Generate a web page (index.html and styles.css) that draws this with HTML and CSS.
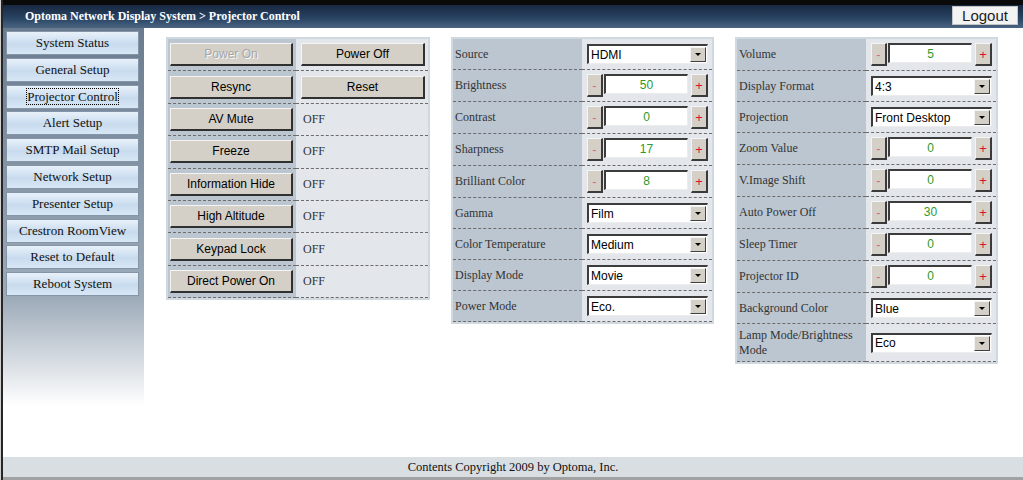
FILE: index.html
```html
<!DOCTYPE html>
<html lang="en">
<head>
    <meta charset="UTF-8">
    <title>Optoma Network Display System - Projector Control</title>
    <link rel="stylesheet" href="styles.css">
</head>
<body>
    <div class="page">
        <header class="topbar">
            <div class="title">Optoma Network Display System &gt; Projector Control</div>
            <button class="logout">Logout</button>
        </header>

        <div class="main-row">
            <nav class="sidebar">
                <a class="nav-btn">System Status</a>
                <a class="nav-btn">General Setup</a>
                <a class="nav-btn"><span class="focused">Projector Control</span></a>
                <a class="nav-btn">Alert Setup</a>
                <a class="nav-btn">SMTP Mail Setup</a>
                <a class="nav-btn">Network Setup</a>
                <a class="nav-btn">Presenter Setup</a>
                <a class="nav-btn">Crestron RoomView</a>
                <a class="nav-btn">Reset to Default</a>
                <a class="nav-btn">Reboot System</a>
            </nav>

            <main class="content">
                <!-- Power / toggle buttons -->
                <div class="panel panel-actions">
                    <div class="cell key"><button class="btn" disabled>Power On</button></div>
                    <div class="cell val"><button class="btn">Power Off</button></div>
                    <div class="cell key"><button class="btn">Resync</button></div>
                    <div class="cell val"><button class="btn">Reset</button></div>
                    <div class="cell key"><button class="btn">AV Mute</button></div>
                    <div class="cell val state">OFF</div>
                    <div class="cell key"><button class="btn">Freeze</button></div>
                    <div class="cell val state">OFF</div>
                    <div class="cell key"><button class="btn">Information Hide</button></div>
                    <div class="cell val state">OFF</div>
                    <div class="cell key"><button class="btn">High Altitude</button></div>
                    <div class="cell val state">OFF</div>
                    <div class="cell key"><button class="btn">Keypad Lock</button></div>
                    <div class="cell val state">OFF</div>
                    <div class="cell key"><button class="btn">Direct Power On</button></div>
                    <div class="cell val state">OFF</div>
                </div>

                <!-- Picture settings -->
                <div class="panel panel-settings">
                    <div class="cell key row-sel">Source</div>
                    <div class="cell val row-sel"><div class="select"><span>HDMI</span><i class="arrow"></i></div></div>
                    <div class="cell key row-spin">Brightness</div>
                    <div class="cell val row-spin"><div class="spin"><button class="minus">-</button><input class="value" value="50"><button class="plus">+</button></div></div>
                    <div class="cell key row-spin">Contrast</div>
                    <div class="cell val row-spin"><div class="spin"><button class="minus">-</button><input class="value" value="0"><button class="plus">+</button></div></div>
                    <div class="cell key row-spin">Sharpness</div>
                    <div class="cell val row-spin"><div class="spin"><button class="minus">-</button><input class="value" value="17"><button class="plus">+</button></div></div>
                    <div class="cell key row-spin">Brilliant Color</div>
                    <div class="cell val row-spin"><div class="spin"><button class="minus">-</button><input class="value" value="8"><button class="plus">+</button></div></div>
                    <div class="cell key row-sel">Gamma</div>
                    <div class="cell val row-sel"><div class="select"><span>Film</span><i class="arrow"></i></div></div>
                    <div class="cell key row-sel">Color Temperature</div>
                    <div class="cell val row-sel"><div class="select"><span>Medium</span><i class="arrow"></i></div></div>
                    <div class="cell key row-sel">Display Mode</div>
                    <div class="cell val row-sel"><div class="select"><span>Movie</span><i class="arrow"></i></div></div>
                    <div class="cell key row-sel">Power Mode</div>
                    <div class="cell val row-sel"><div class="select"><span>Eco.</span><i class="arrow"></i></div></div>
                </div>

                <!-- Projector settings -->
                <div class="panel panel-settings">
                    <div class="cell key row-spin">Volume</div>
                    <div class="cell val row-spin"><div class="spin"><button class="minus">-</button><input class="value" value="5"><button class="plus">+</button></div></div>
                    <div class="cell key row-sel">Display Format</div>
                    <div class="cell val row-sel"><div class="select"><span>4:3</span><i class="arrow"></i></div></div>
                    <div class="cell key row-sel">Projection</div>
                    <div class="cell val row-sel"><div class="select"><span>Front Desktop</span><i class="arrow"></i></div></div>
                    <div class="cell key row-spin">Zoom Value</div>
                    <div class="cell val row-spin"><div class="spin"><button class="minus">-</button><input class="value" value="0"><button class="plus">+</button></div></div>
                    <div class="cell key row-spin">V.Image Shift</div>
                    <div class="cell val row-spin"><div class="spin"><button class="minus">-</button><input class="value" value="0"><button class="plus">+</button></div></div>
                    <div class="cell key row-spin">Auto Power Off</div>
                    <div class="cell val row-spin"><div class="spin"><button class="minus">-</button><input class="value" value="30"><button class="plus">+</button></div></div>
                    <div class="cell key row-spin">Sleep Timer</div>
                    <div class="cell val row-spin"><div class="spin"><button class="minus">-</button><input class="value" value="0"><button class="plus">+</button></div></div>
                    <div class="cell key row-spin">Projector ID</div>
                    <div class="cell val row-spin"><div class="spin"><button class="minus">-</button><input class="value" value="0"><button class="plus">+</button></div></div>
                    <div class="cell key row-sel">Background Color</div>
                    <div class="cell val row-sel"><div class="select"><span>Blue</span><i class="arrow"></i></div></div>
                    <div class="cell key row-tall">Lamp Mode/Brightness Mode</div>
                    <div class="cell val row-tall"><div class="select"><span>Eco</span><i class="arrow"></i></div></div>
                </div>
            </main>
        </div>

        <footer class="footer">Contents Copyright 2009 by Optoma, Inc.</footer>
    </div>
</body>
</html>
```

FILE: styles.css
```css
/* General */
body {
    margin: 0;
    font-family: "Liberation Serif", "Times New Roman", serif;
    font-size: 12px;
    background-color: #cfcfcf;
}

.page {
    width: 1020px;
    height: 480px;
    margin-left: 1px;
    border-left: 2px solid #262626;
    display: flex;
    flex-direction: column;
    background-color: #fff;
}

/* Top bar */
.topbar {
    height: 23px;
    border-top: 5px solid #0a0a0a;
    background: linear-gradient(#172840, #2b4565 60%, #4a6482);
    display: flex;
    justify-content: space-between;
    align-items: center;
    padding: 0 5px 0 22px;
}

.title {
    color: #fff;
    font-weight: bold;
    font-size: 12px;
}

.logout {
    width: 66px;
    height: 19px;
    margin-top: -2px;
    padding: 0;
    border: 1px solid #c4c4c4;
    background-color: #f3f3f3;
    color: #1e1e1e;
    font-family: "Liberation Sans", Arial, sans-serif;
    font-size: 15px;
    line-height: 17px;
}

.main-row {
    flex: 1;
    display: flex;
}

/* Sidebar */
.sidebar {
    width: 141px;
    box-sizing: border-box;
    padding: 3px 0 0 3px;
    background: linear-gradient(#6b7b8f 0, #9dabb9 270px, #fff 378px);
    display: flex;
    flex-direction: column;
    gap: 2.8px;
}

.nav-btn {
    display: block;
    width: 133px;
    height: 24px;
    box-sizing: border-box;
    border: 1px solid #8595a8;
    background: linear-gradient(#e8f1fa, #c8dbee 55%, #d8e7f5);
    color: #111;
    font-size: 13px;
    line-height: 22px;
    text-align: center;
    cursor: pointer;
}

.nav-btn .focused {
    outline: 1px dotted #000;
}

/* Content */
.content {
    flex: 1;
    display: flex;
    align-items: flex-start;
    gap: 21px;
    padding: 9px 0 0 22px;
}

.panel {
    display: grid;
    border: 2px solid #d0d8e0;
}

.panel-actions {
    grid-template-columns: 128px 132px;
}

.panel-settings {
    grid-template-columns: 129px 130px;
}

.cell {
    box-sizing: border-box;
    border-bottom: 1px dashed #6c6c6c;
    display: flex;
    align-items: center;
    height: 32px;
}

.panel-actions .cell {
    height: 32.4px;
}

.cell.key {
    background-color: #bbc6d1;
    color: #333;
    padding-left: 2px;
}

.cell.val {
    background-color: #e3e7eb;
    padding-left: 5px;
}

.panel-actions .cell.state {
    padding-left: 7px;
    color: #333;
}

.cell.row-sel {
    height: 31px;
}

.cell.row-tall {
    height: 38px;
    line-height: 15px;
}

/* Buttons */
.btn {
    width: 123px;
    height: 23px;
    padding: 0;
    box-sizing: border-box;
    background-color: #d4d0c8;
    border-style: solid;
    border-width: 1px 2px 2px 1px;
    border-color: #f4f4f4 #303030 #303030 #f4f4f4;
    color: #000;
    font-family: "Liberation Sans", Arial, sans-serif;
    font-size: 12px;
}

.cell.val .btn {
    width: 124px;
}

.btn:disabled {
    color: #a6a6a6;
    text-shadow: 1px 1px #f8f8f8;
}

/* Spinner */
.spin {
    display: flex;
    align-items: flex-start;
}

.minus, .plus {
    width: 16px;
    height: 23px;
    padding: 0;
    box-sizing: border-box;
    background-color: #d4d0c8;
    border-style: solid;
    border-width: 1px 2px 2px 1px;
    border-color: #f4f4f4 #3a3a3a #3a3a3a #f4f4f4;
    font-family: "Liberation Sans", Arial, sans-serif;
    font-size: 13px;
}

.minus {
    color: #d86a80;
}

.plus {
    width: 17px;
    margin-left: 3px;
    color: #e0102e;
}

.value {
    width: 84px;
    height: 20px;
    margin: 0 0 0 1px;
    padding: 0;
    box-sizing: border-box;
    border-style: solid;
    border-width: 2px 1px 1px 2px;
    border-color: #3c3c3c #ececec #ececec #3c3c3c;
    background-color: #fff;
    color: #2c9a2c;
    text-align: center;
    font-family: "Liberation Sans", Arial, sans-serif;
    font-size: 12px;
}

/* Dropdown */
.select {
    width: 121px;
    height: 20px;
    box-sizing: border-box;
    border-style: solid;
    border-width: 2px 1px 1px 2px;
    border-color: #3c3c3c #ececec #ececec #3c3c3c;
    background-color: #fff;
    display: flex;
    align-items: center;
    justify-content: space-between;
    padding: 0 1px 0 2px;
    font-family: "Liberation Sans", Arial, sans-serif;
    font-size: 12px;
    color: #000;
}

.arrow {
    position: relative;
    width: 16px;
    height: 15px;
    box-sizing: border-box;
    background-color: #d4d0c8;
    border-style: solid;
    border-width: 1px;
    border-color: #f4f4f4 #404040 #404040 #f4f4f4;
}

.arrow::after {
    content: "";
    position: absolute;
    left: 4px;
    top: 5px;
    border-left: 3px solid transparent;
    border-right: 3px solid transparent;
    border-top: 3px solid #000;
}

/* Footer */
.footer {
    height: 20px;
    line-height: 21px;
    background-color: #d9dee3;
    border-bottom: 3px solid #a2a2a2;
    text-align: center;
    color: #111;
    font-size: 12.5px;
}
```
